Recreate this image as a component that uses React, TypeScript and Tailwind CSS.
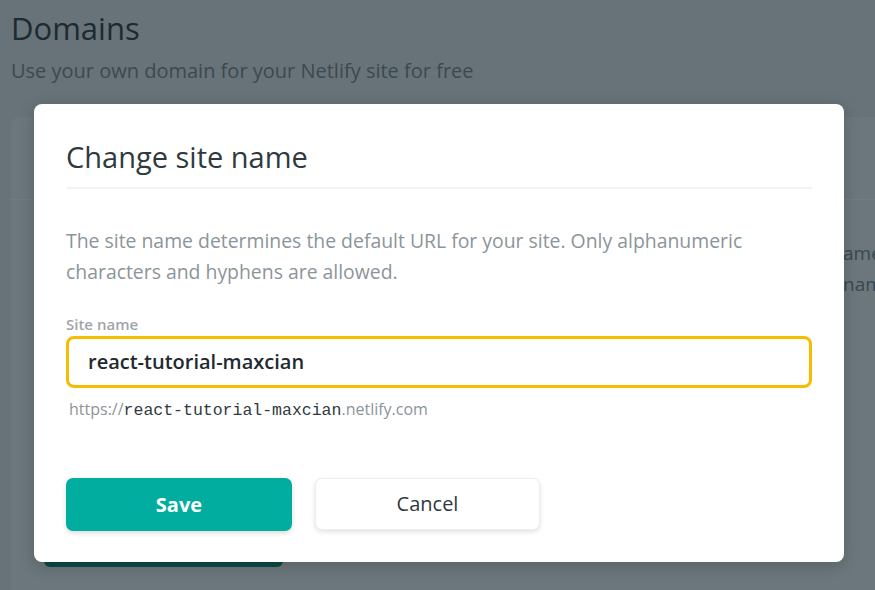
import { useState } from "react";

const FONT = "font-['Open_Sans','Noto_Sans',sans-serif]";

function BackgroundPage() {
  return (
    <div className="flex h-full flex-col bg-[#677378] pl-[11px]">
      <h1 className="mt-[8px] text-[31px] leading-[40px] text-[#1d2a30]">Domains</h1>
      <p className="mt-[9px] text-[20px] leading-[28px] text-[#3c494f]">
        Use your own domain for your Netlify site for free
      </p>
      <div className="mt-[32px] flex flex-1 flex-col rounded-tl-[8px] bg-[#6b777c]">
        <div className="h-[83px] border-b border-[#717c81]" />
        <div className="flex flex-col items-end pt-[38px] text-[19px] leading-[31px] text-[#3a474d]">
          <span className="w-[32px] overflow-hidden whitespace-nowrap">ame</span>
          <span className="w-[32px] overflow-hidden whitespace-nowrap">nam</span>
        </div>
        <div className="mt-auto mb-[23px] ml-[33px] h-[40px] w-[239px] rounded-[6px] bg-[#0b4a47]" />
      </div>
    </div>
  );
}

export default function App() {
  const [name, setName] = useState("react-tutorial-maxcian");

  return (
    <div className={`relative h-[590px] w-[875px] overflow-hidden ${FONT}`}>
      <BackgroundPage />

      <div className="absolute inset-0 pt-[104px] pl-[34px]">
        <div className="flex h-[458px] w-[810px] flex-col rounded-[8px] bg-white px-[32px] shadow-[0_4px_16px_rgba(0,0,0,0.18)]">
          <h2 className="mt-[35px] pb-[12px] text-[29px] leading-[36px] text-[#2e3a40]">Change site name</h2>
          <div className="h-[2px] bg-[#f3f3f3]" />

          <p className="mt-[36px] text-[19.4px] leading-[31px] text-[#8b959a]">
            The site name determines the default URL for your site. Only alphanumeric characters and hyphens are
            allowed.
          </p>

          <label className="mt-[27px] text-[15px] font-semibold leading-[20px] text-[#9ea5a9]">Site name</label>
          <div className="mt-[2px] flex h-[52px] items-center rounded-[8px] border-[3px] border-[#f7bb00] px-[19px]">
            <input
              value={name}
              onChange={(e) => setName(e.target.value)}
              className="w-full bg-transparent text-[20px] font-semibold text-[#1e2a30] outline-none"
            />
          </div>
          <div className="mt-[9px] pl-[3px] text-[16px] leading-[24px] text-[#8b959a]">
            https://<span className="font-['Liberation_Mono',monospace] text-[16.5px] text-[#2e3a40]">{name}</span>
            .netlify.com
          </div>

          <div className="mt-[55px] flex gap-[23px]">
            <button className="h-[53px] w-[226px] rounded-[7px] bg-[#00ad9f] text-[20px] font-bold text-white shadow-[0_2px_5px_rgba(0,0,0,0.15)]">
              Save
            </button>
            <button className="h-[52px] w-[225px] rounded-[7px] border border-[#eceeef] bg-white text-[20px] text-[#2e3a40] shadow-[0_2px_5px_rgba(0,0,0,0.12)]">
              Cancel
            </button>
          </div>
        </div>
      </div>
    </div>
  );
}
